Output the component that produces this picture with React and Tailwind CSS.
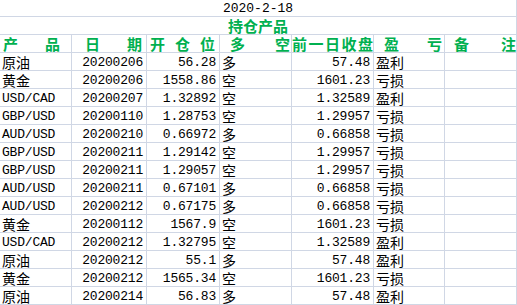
import React from "react";

const ROWS = [
  ["原油", "20200206", "56.28", "多", "57.48", "盈利"],
  ["黄金", "20200206", "1558.86", "空", "1601.23", "亏损"],
  ["USD/CAD", "20200207", "1.32892", "空", "1.32589", "盈利"],
  ["GBP/USD", "20200110", "1.28753", "空", "1.29957", "亏损"],
  ["AUD/USD", "20200210", "0.66972", "多", "0.66858", "亏损"],
  ["GBP/USD", "20200211", "1.29142", "空", "1.29957", "亏损"],
  ["GBP/USD", "20200211", "1.29057", "空", "1.29957", "亏损"],
  ["AUD/USD", "20200211", "0.67101", "多", "0.66858", "亏损"],
  ["AUD/USD", "20200212", "0.67175", "多", "0.66858", "亏损"],
  ["黄金", "20200112", "1567.9", "空", "1601.23", "亏损"],
  ["USD/CAD", "20200212", "1.32795", "空", "1.32589", "盈利"],
  ["原油", "20200212", "55.1", "多", "57.48", "盈利"],
  ["黄金", "20200212", "1565.34", "空", "1601.23", "亏损"],
  ["原油", "20200214", "56.83", "多", "57.48", "盈利"],
];

const HEADERS = [
  { chars: ["产", "品"], pad: "pl-[3px] pr-[11px]" },
  { chars: ["日", "期"], pad: "pl-[13px] pr-[4px]" },
  { chars: ["开", "仓", "位"], pad: "pl-[3px] pr-[4px]" },
  { chars: ["多", "空"], pad: "pl-[10px] pr-[1px]" },
  { chars: ["前", "一", "日", "收", "盘"], pad: "pl-0 pr-0" },
  { chars: ["盈", "亏"], pad: "pl-[10px] pr-[2px]" },
  { chars: ["备", "注"], pad: "pl-[9px] pr-0" },
];

// right-aligned numeric columns
const RIGHT = [false, true, true, false, true, false, false];

const cjk = (s) => /[^\x00-\x7f]/.test(s);

const GREEN = "font-['Noto_Sans_CJK_SC',sans-serif] font-bold text-[15px] leading-[17px] text-[#00b050]";

function Cell({ value, right }) {
  return (
    <div
      className={`h-[18px] border-r border-b border-[#d0d7e5] flex items-end overflow-hidden whitespace-nowrap ${
        right ? "justify-end pr-[3px]" : "justify-start pl-[2px]"
      }`}
    >
      {value && (
        <span
          className={
            cjk(value)
              ? "font-['Noto_Sans_CJK_SC',sans-serif] text-[14px] leading-[16px]"
              : "font-['Liberation_Mono',monospace] text-[13px] tracking-[-0.2px] leading-[15px]"
          }
        >
          {value}
        </span>
      )}
    </div>
  );
}

export default function App() {
  return (
    <div className="w-[517px] h-[305px] bg-white text-black overflow-hidden">
      <div className="grid grid-cols-[72px_75px_73px_72px_82px_71px_72px]">
        <div className="col-span-7 h-[17px] border-r border-b border-[#d0d7e5] flex items-end justify-center">
          <span className="font-['Liberation_Mono',monospace] text-[13px] leading-[15px]">2020-2-18</span>
        </div>
        <div className="col-span-7 h-[18px] border-r border-b border-[#d0d7e5] flex items-end justify-center">
          <span className={GREEN}>持仓产品</span>
        </div>
        {HEADERS.map((h, i) => (
          <div
            key={i}
            className={`h-[18px] border-r border-b border-[#d0d7e5] flex items-end justify-between ${h.pad}`}
          >
            {h.chars.map((c, j) => (
              <span key={j} className={GREEN}>
                {c}
              </span>
            ))}
          </div>
        ))}
        {ROWS.map((row, r) =>
          [...row, ""].map((v, c) => <Cell key={`${r}-${c}`} value={v} right={RIGHT[c]} />)
        )}
      </div>
    </div>
  );
}
